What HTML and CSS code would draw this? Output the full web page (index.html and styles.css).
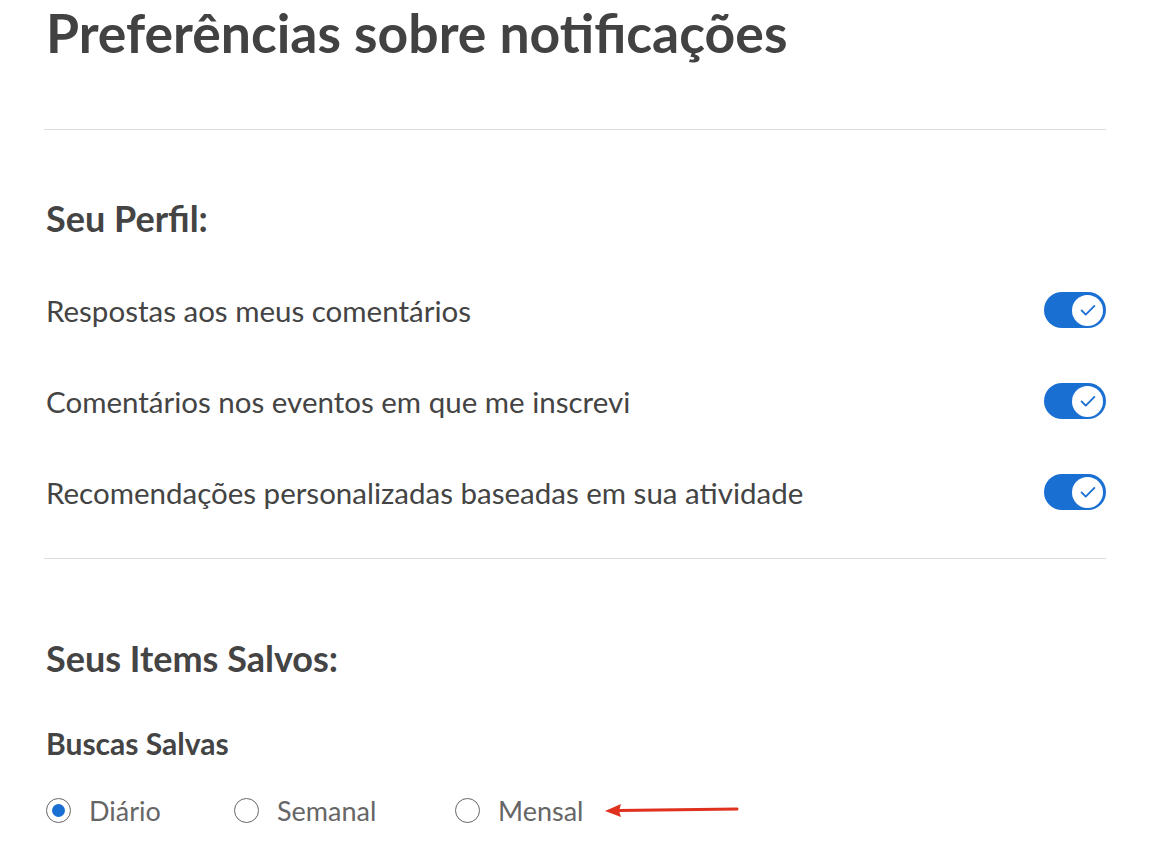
FILE: index.html
```html
<!DOCTYPE html>
<html lang="pt">
<head>
<meta charset="utf-8">
<link rel="stylesheet" href="styles.css">
</head>
<body>
<main class="page">
  <h1 class="title">Preferências sobre notificações</h1>
  <hr class="divider divider-top">
  <section class="section">
    <h2 class="section-title">Seu Perfil:</h2>
    <div class="rows">
      <div class="row">
        <span class="row-label">Respostas aos meus comentários</span>
        <span class="toggle"><span class="knob"><svg viewBox="0 0 24 24" width="22" height="22"><path d="M5 12.5l4.5 4.5L19 7.5" fill="none" stroke="#1a6fd3" stroke-width="2" stroke-linecap="round" stroke-linejoin="round"/></svg></span></span>
      </div>
      <div class="row">
        <span class="row-label">Comentários nos eventos em que me inscrevi</span>
        <span class="toggle"><span class="knob"><svg viewBox="0 0 24 24" width="22" height="22"><path d="M5 12.5l4.5 4.5L19 7.5" fill="none" stroke="#1a6fd3" stroke-width="2" stroke-linecap="round" stroke-linejoin="round"/></svg></span></span>
      </div>
      <div class="row">
        <span class="row-label">Recomendações personalizadas baseadas em sua atividade</span>
        <span class="toggle"><span class="knob"><svg viewBox="0 0 24 24" width="22" height="22"><path d="M5 12.5l4.5 4.5L19 7.5" fill="none" stroke="#1a6fd3" stroke-width="2" stroke-linecap="round" stroke-linejoin="round"/></svg></span></span>
      </div>
    </div>
  </section>
  <hr class="divider divider-mid">
  <section class="section">
    <h2 class="section-title saved-title">Seus Items Salvos:</h2>
    <h3 class="sub-title">Buscas Salvas</h3>
    <div class="radios">
      <label class="radio radio-d"><span class="dot checked"></span><span class="radio-label">Diário</span></label>
      <label class="radio radio-s"><span class="dot"></span><span class="radio-label">Semanal</span></label>
      <label class="radio radio-m"><span class="dot"></span><span class="radio-label">Mensal</span></label>
      <span class="arrow"><svg viewBox="0 0 136 14" width="136" height="14"><path d="M14 7.5 L133 6" stroke="#e0301e" stroke-width="3" stroke-linecap="round" fill="none"/><path d="M1 8 L17 1 L15 8 L17 14 Z" fill="#e0301e"/></svg></span>
    </div>
  </section>
</main>
</body>
</html>
```

FILE: styles.css
```css
* { box-sizing: border-box; }
html, body { margin: 0; padding: 0; background: #ffffff; }
body {
  font-family: "Lato", "Open Sans", sans-serif;
  color: #444444;
}
.page {
  width: 1062px;
  margin-left: 44px;
  padding-top: 2px;
}
.title {
  margin: 0 0 0 2px;
  font-size: 53.5px;
  font-weight: 700;
  line-height: 60px;
  color: #424242;
}
.divider {
  border: 0;
  border-top: 1px solid #dddddd;
  margin: 0;
}
.divider-top { margin-top: 67px; }
.section-title {
  margin: 0 0 0 2px;
  font-size: 36px;
  font-weight: 700;
  line-height: 40px;
  color: #444;
}
.section:first-of-type .section-title { margin-top: 68px; }
.rows {
  margin-top: 54px;
  display: flex;
  flex-direction: column;
  gap: 55px;
}
.row {
  display: flex;
  align-items: center;
  justify-content: space-between;
  height: 36px;
}
.row-label {
  margin-left: 2px;
  font-size: 29.5px;
  color: #444;
}
.toggle {
  width: 62px;
  height: 36px;
  border-radius: 18px;
  background: #1a6fd3;
  display: flex;
  align-items: center;
  justify-content: flex-end;
  padding-right: 3px;
}
.knob {
  width: 31px;
  height: 31px;
  border-radius: 50%;
  background: #fff;
  display: flex;
  align-items: center;
  justify-content: center;
}
.divider-mid { margin-top: 48px; }
.saved-title { margin-top: 79px; }
.sub-title {
  margin: 48px 0 0 2px;
  font-size: 30px;
  font-weight: 700;
  line-height: 34px;
  color: #444;
}
.radios {
  margin-top: 34px;
  display: flex;
  align-items: center;
  height: 32px;
}
.radio {
  display: flex;
  align-items: center;
  gap: 18px;
  flex: none;
}
.radio-d { margin-left: 2px; width: 188px; }
.radio-s { width: 221px; }
.radio-m { width: 149px; }
.dot {
  width: 25px;
  height: 25px;
  border-radius: 50%;
  border: 1.5px solid #666;
  display: flex;
  align-items: center;
  justify-content: center;
}
.dot.checked::after {
  content: "";
  width: 13px;
  height: 13px;
  border-radius: 50%;
  background: #1a6fd3;
}
.radio-label {
  font-size: 27px;
  color: #666;
}
.arrow {
  display: flex;
}
```
